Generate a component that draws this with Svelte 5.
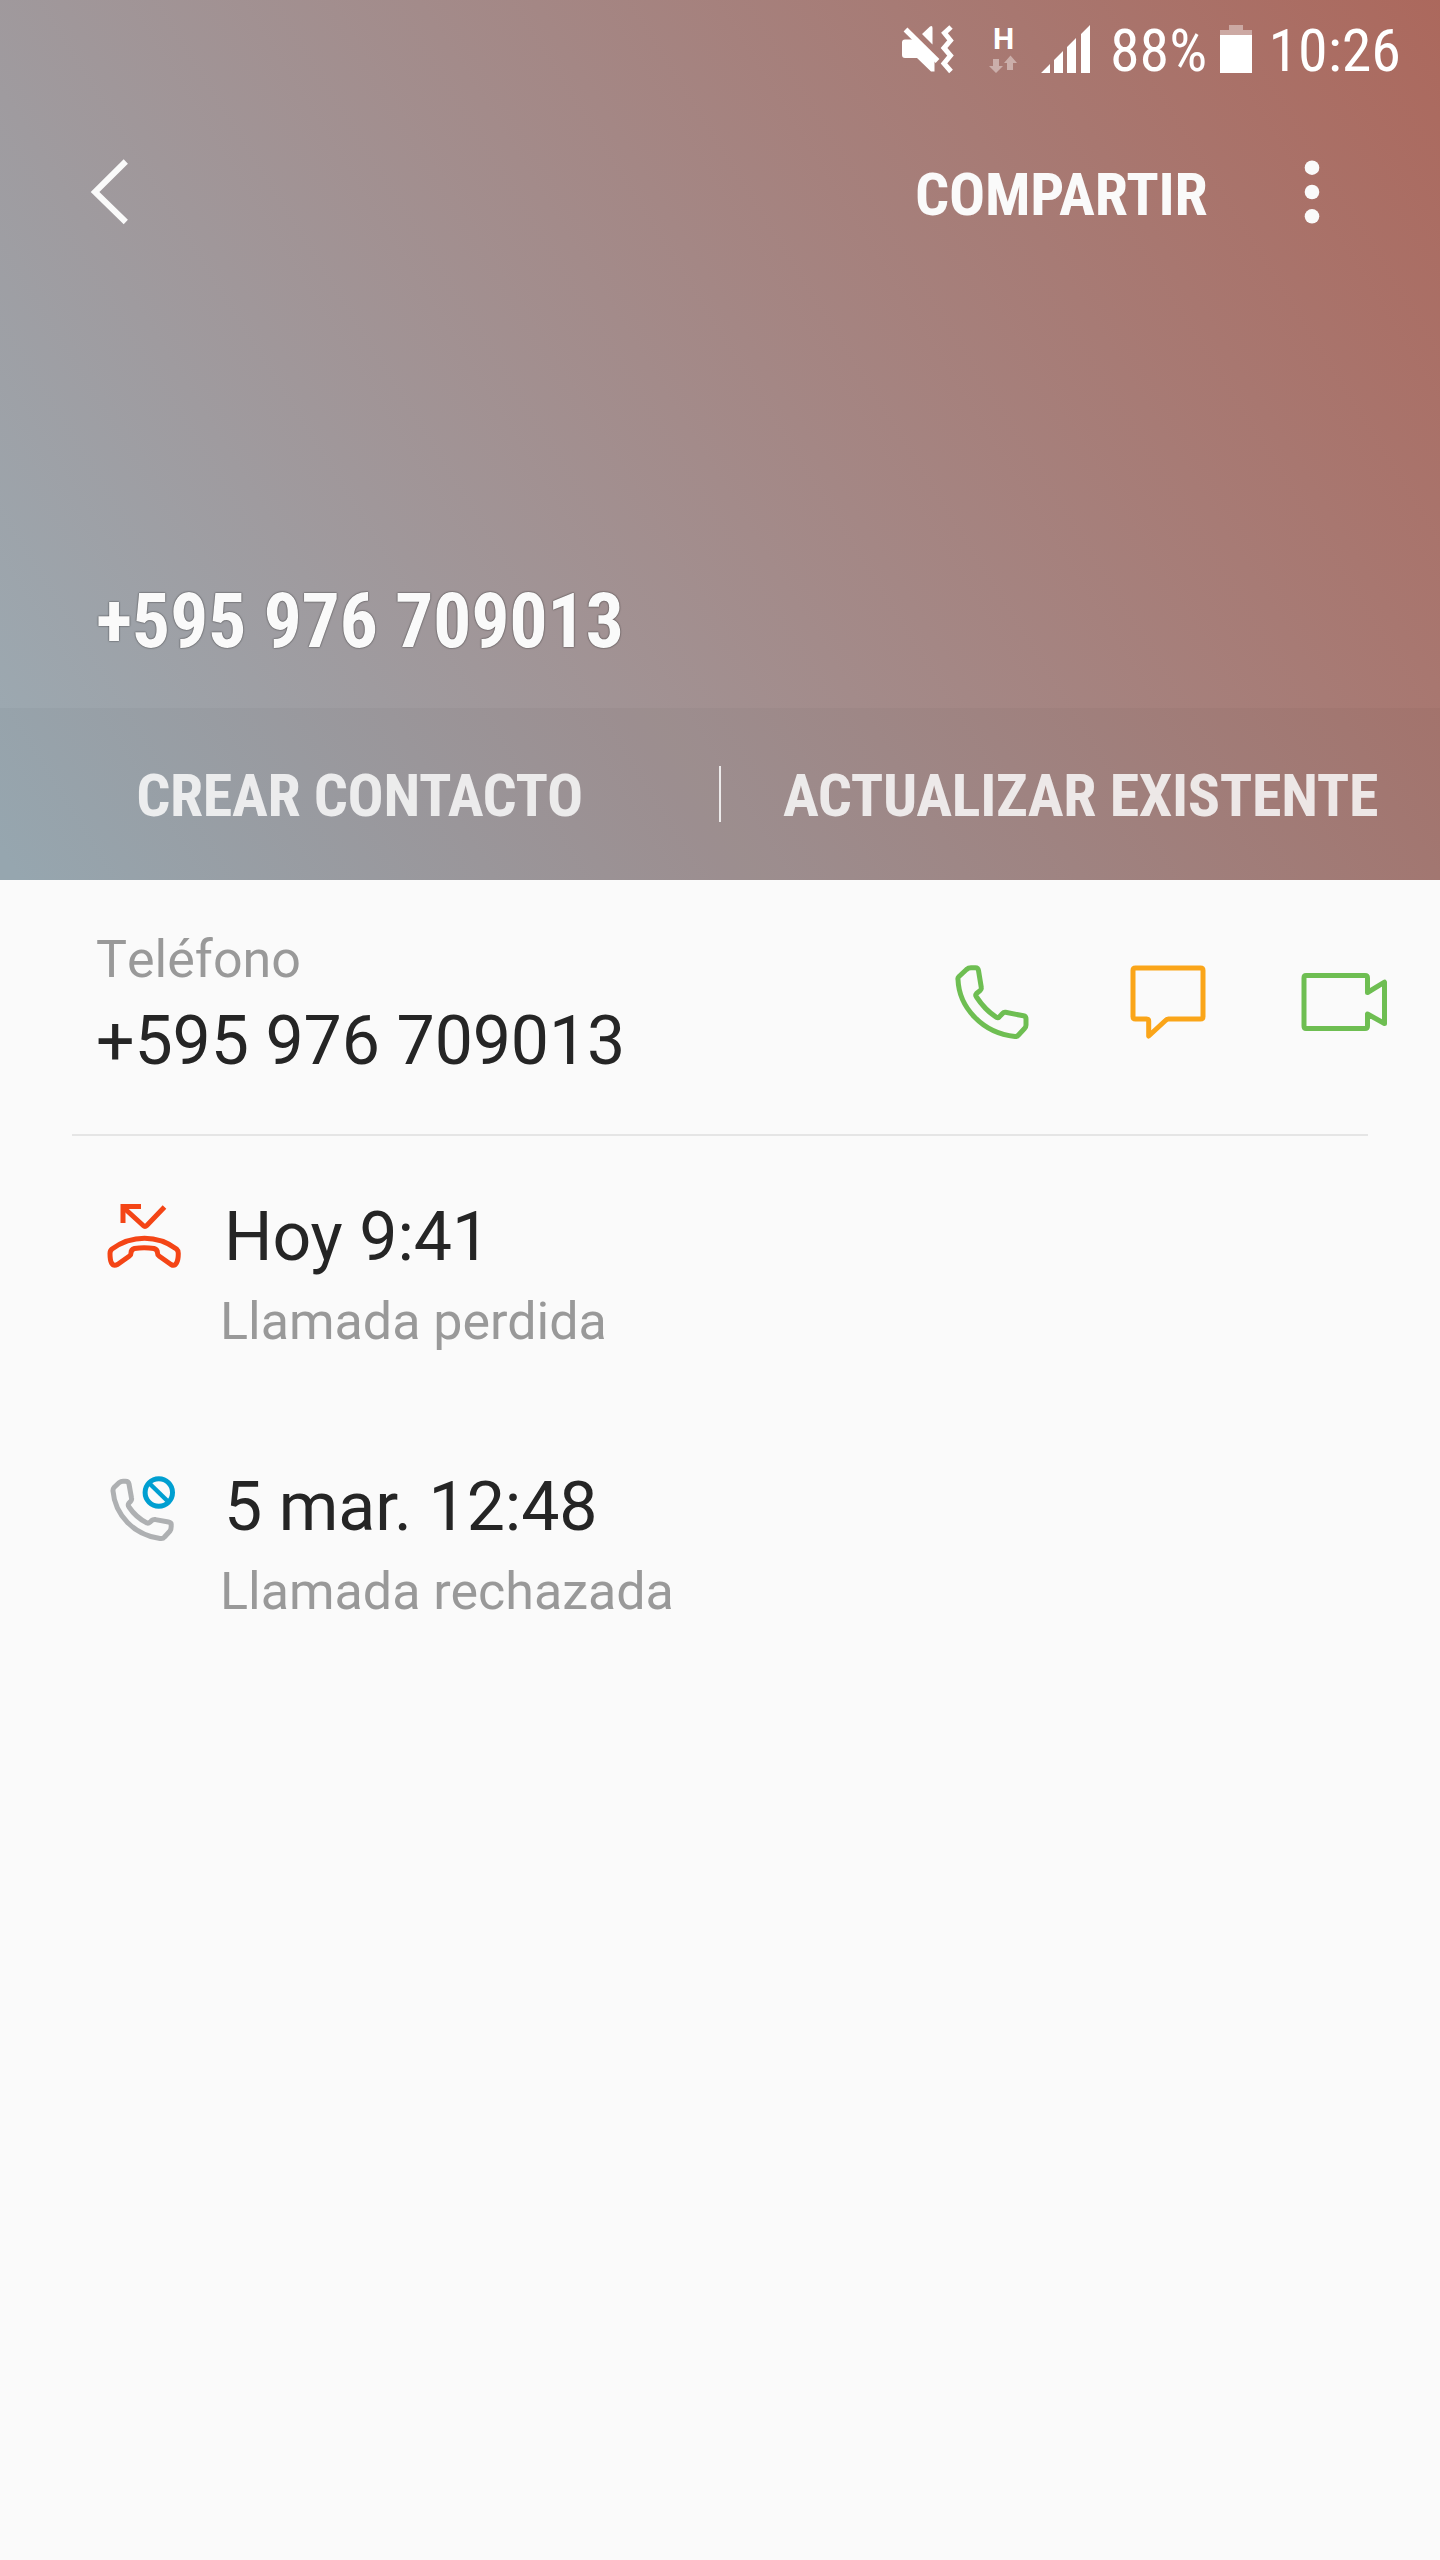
<script>
  const calls = [
    { kind: 'missed', when: 'Hoy 9:41', what: 'Llamada perdida' },
    { kind: 'rejected', when: '5 mar. 12:48', what: 'Llamada rechazada' }
  ];
</script>

<main class="screen">
  <header class="hero">
    <div class="status">
      <svg class="mute" width="54" height="52" viewBox="0 0 54 52">
        <path fill="#fff" d="M2 17.500Q2 14.500 5 14.500H17L34.500 33V46.500H31L17 33H5Q2 33 2 30ZM22 9 30 1.500Q32.500 0 32.500 3V19.500Z" />
        <path d="M7.500 1.500 40.500 33.500" stroke="#ab7a73" stroke-width="3" />
        <path d="M5.500 4.500 37.500 36" stroke="#fff" stroke-width="5.400" />
        <path d="M51 2 44.500 8 50.500 15.500 44 23 50.500 30.500 44 38.500 51 46.500" fill="none" stroke="#fff" stroke-width="5" />
      </svg>
      <div class="net">
        <span>H</span>
        <svg width="30" height="20" viewBox="0 0 30 20" fill="#fff" fill-opacity=".4">
          <path d="M5 5h6v7h4l-7 7-7-7h4zM19 16v-7h-3l6.500-7.500 6.500 7.500h-4v7z" />
        </svg>
      </div>
      <svg class="signal" width="50" height="50" viewBox="0 0 50 50" fill="#fff">
        <path d="M0 49 9 40v9zM13 49V36l9-9v22zM26 49V23l9-9v35zM40 49V10l9-9v48z" />
      </svg>
      <span class="pct">88%</span>
      <svg class="battery" width="32" height="50" viewBox="0 0 32 50">
        <path d="M0 6h9V1h14v5h9v5H0z" fill="#fff" fill-opacity=".4" />
        <path d="M0 11h32v38H0z" fill="#fff" />
      </svg>
      <span class="clock">10:26</span>
    </div>

    <nav class="bar">
      <svg class="back" width="40" height="66" viewBox="0 0 40 66" fill="none" stroke="#fafafa" stroke-width="6">
        <path d="M35.800 2.500 5 33 35.800 63" />
      </svg>
      <span class="share">COMPARTIR</span>
      <svg class="more" width="16" height="64" viewBox="0 0 16 64" fill="#fafafa">
        <circle cx="8" cy="7.700" r="7.300" /><circle cx="8" cy="32" r="7.300" /><circle cx="8" cy="56.300" r="7.300" />
      </svg>
    </nav>

    <h1><span>+595 976 709013</span></h1>

    <div class="actions">
      <div class="action"><span>CREAR CONTACTO</span></div>
      <i></i>
      <div class="action"><span>ACTUALIZAR EXISTENTE</span></div>
    </div>
  </header>

  <section class="phone">
    <div class="info">
      <div class="label">Teléfono</div>
      <div class="number">+595 976 709013</div>
    </div>
    <div class="icons">
      <svg width="74" height="76" viewBox="0 0 74 76" fill="none" stroke="#6ebe52" stroke-width="5" stroke-linejoin="round">
        <path d="M3 14.500Q2.500 13 4 11.500L11.500 4.500Q13.500 2.800 16 2.800H20.500Q23 2.800 23.500 5.500L26.300 22.500Q26.600 24 25.300 25.300L21.500 28.500Q20 30 21.500 32 30.500 45.500 41.500 52.300 43 53.200 44.300 51.900L47.500 48.500Q48.800 47 50.500 47.300L68.500 50.800Q71 51.300 71 54V60Q71 62 69.500 63.500L63.500 70Q62 71.700 60 71.500C27 68 4 42 3 14.500Z" />
      </svg>
      <svg class="chat" width="76" height="76" viewBox="0 0 76 76" fill="none" stroke="#faa519" stroke-width="5" stroke-linejoin="round">
        <path d="M5.500 3H70.500Q73 3 73 5.500V51.500Q73 54 70.500 54H38.500Q37 54 35.500 55.500L18.700 71V56Q18.700 54 16.500 54H5.500Q3 54 3 51.500V5.500Q3 3 5.500 3Z" />
      </svg>
      <svg width="88" height="76" viewBox="0 0 88 76" fill="none" stroke="#6ebe52" stroke-width="5" stroke-linejoin="round">
        <path d="M5 10.500H64Q66.500 10.500 66.500 13V27.500L83.500 17.200V58.500L66.500 49V61Q66.500 63.500 64 63.500H5Q3 63.500 3 61V13Q3 10.500 5 10.500Z" />
      </svg>
    </div>
  </section>

  <ul class="log">
    {#each calls as call}
      <li>
        <div class="glyph">
          {#if call.kind === 'missed'}
            <svg width="80" height="80" viewBox="0 0 80 80" fill="none" stroke="#f44516" stroke-width="5">
              <path d="M36 4.500H18V21" />
              <path d="M19 6 38.200 23.500Q40 25.300 41.800 23.500L59.500 5" />
              <path stroke-linejoin="round" d="M5 51.500Q5 48.500 7 47 22 36.300 39.500 36.300T71.500 47Q73.300 48.500 73.300 51.500 73.300 58 71.500 61 69.500 64.500 66 62.500L54 54Q52.500 53 52.500 51 52.500 47.500 49 46.500 39 44.800 29.500 46.500 26 47.500 26 51 26 53 24.500 54L12.500 62.500Q8.500 64.500 6.500 61 5 58 5 51.500Z" />
            </svg>
          {:else}
            <svg width="80" height="80" viewBox="0 0 80 80" fill="none">
              <path stroke="#aeb0b2" stroke-width="5" stroke-linejoin="round" d="M8 19Q7.800 17 9 15.500L14 10.700Q16 9.200 18 9.200H20.500Q23.500 9.200 24 12L26.500 26Q27 28 25.500 29.500L24 31Q22.500 33 24 35 31 45.500 42 51 43.500 51.500 45 50.200L46.500 48.700Q48 47.300 50.500 47.600L63.500 50Q66.500 50.600 66.200 53V54.500Q66.200 57 65 59L59.500 65Q58 67 55 66.500C29 63 10 43 8 19Z" />
              <circle cx="53.800" cy="20.500" r="13.700" stroke="#009fd1" stroke-width="5" />
              <path d="M44.500 11.500 63 29.500" stroke="#009fd1" stroke-width="4.500" />
            </svg>
          {/if}
        </div>
        <div class="entry">
          <div class="when">{call.when}</div>
          <div class="what">{call.what}</div>
        </div>
      </li>
    {/each}
  </ul>
</main>

<style>
  :global(body) { margin: 0; background: #fafafa; }
  .screen { width: 1440px; height: 2560px; overflow: hidden; background: #fafafa; font-family: Roboto, 'Liberation Sans', sans-serif; color: #252525; }
  svg { display: block; flex: none; }
  span { white-space: nowrap; }
  .hero { display: flex; flex-direction: column; height: 880px; color: #fafafa; font-stretch: 75%; font-family: 'Roboto Condensed', Roboto, sans-serif; background: linear-gradient(58deg, #9babb4 1%, #ac675b 102%); }
  .status { display: flex; height: 100px; color: #fff; font-size: 60px; line-height: 102px; padding-left: 900px; }
  .mute { margin-top: 25px; }
  .net { margin-left: 34px; width: 32px; display: flex; flex-direction: column; padding-top: 27px; }
  .net span { font: 700 30px/24px Roboto, sans-serif; padding-left: 5px; height: 27px; }
  .signal { margin: 24px 0 0 21px; }
  .pct { width: 96px; margin-left: 19px; }
  .battery { margin: 24px 0 0 14px; }
  .clock { margin-left: 16.500px; }
  .bar { display: flex; height: 184px; padding: 0 120px 0 90px; align-items: center; }
  .share { margin-left: auto; font-size: 60px; font-weight: 700; letter-spacing: -.2px; padding-top: 4px; }
  .more { margin-left: 96.500px; }
  h1 { margin: 0; height: 424px; font-size: 76px; font-weight: 700; letter-spacing: -.3px; line-height: 90px; box-sizing: border-box; padding: 292px 0 0 96px; text-shadow: 0 0 1px rgba(0,0,0,.6), 0 0 2px rgba(0,0,0,.5); }
  .actions { display: flex; height: 172px; align-items: center; background: rgba(0, 0, 0, .027); }
  .action { flex: 1; display: flex; justify-content: center; padding-top: 3px; font-size: 60px; font-weight: 700; letter-spacing: -.35px; color: rgba(250,250,250,.85); }
  .actions i { width: 2px; height: 56px; background: rgba(250,250,250,.85); }
  .phone { display: flex; justify-content: space-between; box-sizing: border-box; height: 256px; margin: 0 72px; border-bottom: 2px solid #e5e5e5; }
  .info { padding: 49px 0 0 24px; }
  .label, .what { font-size: 52px; line-height: 61px; color: #999; }
  .label { font-kerning: none; }
  .number, .when { font-size: 68px; line-height: 80px; letter-spacing: -.12px; white-space: nowrap; }
  .number { margin-top: 11px; }
  .icons { display: flex; margin-right: -20.5px; padding-top: 85px; }
  .chat { margin: 0 94.5px 0 101px; }
  .log { list-style: none; margin: 0; padding: 61px 0 0; }
  li { display: flex; height: 270px; padding-left: 104.5px; }
  .glyph { width: 80px; padding-top: 5px; }
  .entry { padding-left: 35.500px; }
  .when { padding-left: 4px; }
  .what { margin-top: 14px; }
</style>
